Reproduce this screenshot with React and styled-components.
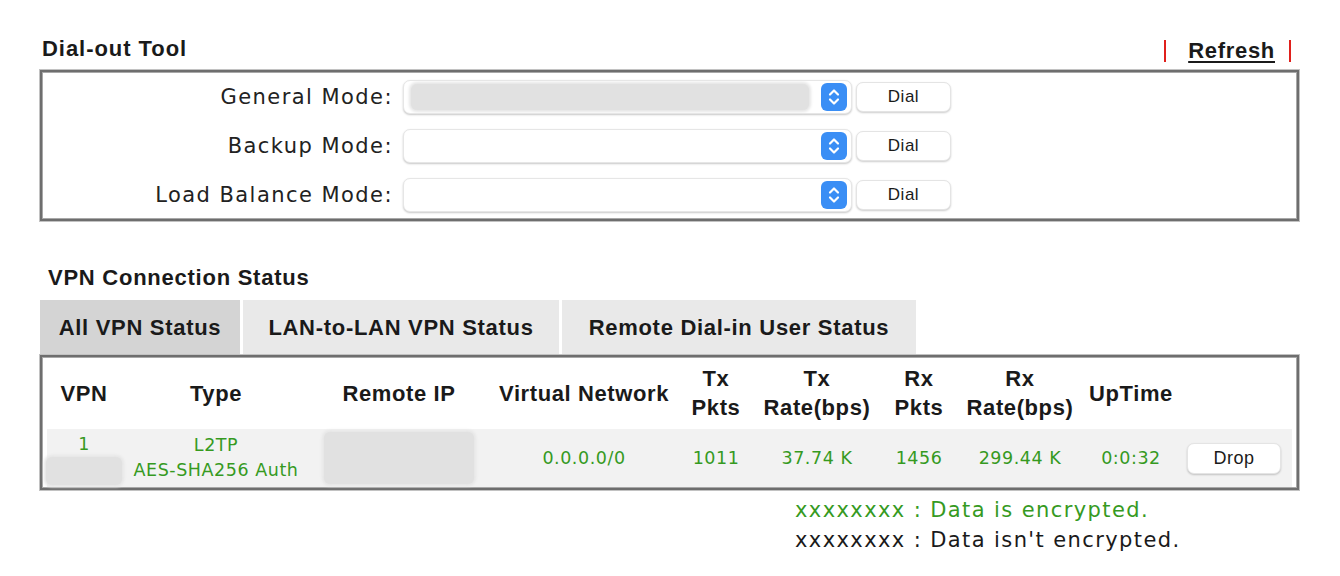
import React from "react";
import styled, { createGlobalStyle } from "styled-components";

const Global = createGlobalStyle`
  html, body { margin: 0; padding: 0; background: #fff; }
  body { font-family: "Liberation Sans", Arial, sans-serif; color: #1a1a1a; }
  * { box-sizing: border-box; }
`;

const GREEN = "#369a1f";

const Page = styled.div`
  width: 1340px;
  padding: 30px 0 0 40px;
`;

const Section = styled.div`
  width: 1259px;
`;

const SectionHead = styled.div`
  height: 40px;
  display: flex;
  align-items: flex-end;
  justify-content: space-between;
  padding: 0 8px 8px 2px;
`;

const Title = styled.div`
  font-family: "Liberation Sans", Arial, sans-serif;
  font-weight: bold;
  font-size: 22px;
  letter-spacing: 0.95px;
  line-height: 26px;
  color: #1a1a1a;
`;

const VpnTitle = styled(Title)`
  margin: 43px 0 8px 8px;
  line-height: 28px;
  letter-spacing: 0.75px;
`;

const RefreshWrap = styled.div`
  display: flex;
  align-items: center;
  gap: 22px;
  height: 26px;
  margin-bottom: -2px;
`;

const Bar = styled.span`
  display: block;
  width: 2px;
  height: 22px;
  background: #e0201c;
`;

const RefreshLink = styled.a`
  font-weight: bold;
  font-size: 22px;
  letter-spacing: 0.7px;
  color: #1a1a1a;
  text-decoration: underline;
  text-underline-offset: 3px;
  text-decoration-thickness: 2px;
  cursor: pointer;
  margin-right: -8px;
`;

const Frame = styled.div`
  border: 2px solid #6e6e6e;
  outline: 1px solid #c2c2c2;
  box-shadow: inset 0 0 0 1px #a8a8a8;
  padding: ${(p) => p.$pad};
`;

const DialRow = styled.div`
  height: 49px;
  display: flex;
  align-items: center;
`;

const Label = styled.div`
  width: 351px;
  margin-right: 10px;
  text-align: right;
  font-family: "DejaVu Sans", Verdana, sans-serif;
  font-size: 21px;
  letter-spacing: 1.45px;
  color: #222;
`;

const Select = styled.div`
  position: relative;
  width: 449px;
  height: 34px;
  border-radius: 7px;
  background: #fff;
  border: 1px solid #e6e6e6;
  box-shadow: 0 1px 2px rgba(0, 0, 0, 0.22);
  display: flex;
  align-items: center;
  padding: 0 4px 0 7px;
`;

const Blur = styled.div`
  background: #e1e1e1;
  border-radius: 6px;
  box-shadow: 0 0 3px 2px #e6e6e6;
  width: ${(p) => p.$w}px;
  height: ${(p) => p.$h}px;
`;

const SelectFill = styled.div`
  flex: 1;
  display: flex;
  align-items: center;
  height: 100%;
`;

const Stepper = styled.div`
  width: 26px;
  height: 28px;
  border-radius: 6px;
  background: #3a8ef5;
  display: flex;
  align-items: center;
  justify-content: center;
  margin-left: 10px;
`;

const MacButton = styled.button`
  width: ${(p) => p.$w}px;
  height: ${(p) => p.$h}px;
  margin-left: ${(p) => p.$ml || 0}px;
  border-radius: 7px;
  background: #fff;
  border: 1px solid #e4e4e4;
  box-shadow: 0 1px 2px rgba(0, 0, 0, 0.2);
  font-family: "Liberation Sans", Arial, sans-serif;
  font-size: ${(p) => p.$fs}px;
  letter-spacing: 0.5px;
  color: #1a1a1a;
  padding: 0;
`;

const Tabs = styled.div`
  display: flex;
  gap: 3px;
`;

const Tab = styled.div`
  width: ${(p) => p.$w}px;
  height: 55px;
  display: flex;
  align-items: center;
  justify-content: center;
  background: ${(p) => (p.$active ? "#d4d4d4" : "#e9e9e9")};
  font-weight: bold;
  font-size: 22px;
  letter-spacing: 0.7px;
  color: #1a1a1a;
`;

const COLS = "74px 190px 176px 194px 70px 132px 72px 130px 92px 114px";

const HeadRow = styled.div`
  display: grid;
  grid-template-columns: ${COLS};
  height: 72px;
  align-items: center;
`;

const HeadCell = styled.div`
  text-align: center;
  font-weight: bold;
  font-size: 22px;
  letter-spacing: 0.6px;
  line-height: 29px;
  color: #1a1a1a;
  white-space: nowrap;
`;

const DataRow = styled.div`
  display: grid;
  grid-template-columns: ${COLS};
  height: 58px;
  align-items: center;
  background: #f2f2f2;
`;

const Cell = styled.div`
  display: flex;
  flex-direction: column;
  align-items: center;
  justify-content: center;
  text-align: center;
  font-family: "DejaVu Sans", Verdana, sans-serif;
  font-size: 17.5px;
  letter-spacing: 0.55px;
  line-height: 25px;
  color: ${GREEN};
  white-space: nowrap;
`;

const Legend = styled.div`
  margin: 5px 0 0 755px;
  font-family: "DejaVu Sans", Verdana, sans-serif;
  font-size: 21px;
  letter-spacing: 1.4px;
  line-height: 30px;
`;

const LegendLine = styled.div`
  color: ${(p) => (p.$green ? GREEN : "#1a1a1a")};
`;

function StepIcon() {
  return (
    <svg width="14" height="20" viewBox="0 0 14 20" fill="none">
      <path d="M3 7.5 L7 3.5 L11 7.5" stroke="#fff" strokeWidth="2.2" strokeLinecap="round" strokeLinejoin="round" />
      <path d="M3 12.5 L7 16.5 L11 12.5" stroke="#fff" strokeWidth="2.2" strokeLinecap="round" strokeLinejoin="round" />
    </svg>
  );
}

function ModeRow({ label, filled }) {
  return (
    <DialRow>
      <Label>{label}</Label>
      <Select>
        <SelectFill>{filled && <Blur $w={398} $h={26} />}</SelectFill>
        <Stepper>
          <StepIcon />
        </Stepper>
      </Select>
      <MacButton $w={95} $h={30} $fs={17} $ml={4}>
        Dial
      </MacButton>
    </DialRow>
  );
}

export default function App() {
  return (
    <>
      <Global />
      <Page>
        <Section>
          <SectionHead>
            <Title>Dial-out Tool</Title>
            <RefreshWrap>
              <Bar />
              <RefreshLink>Refresh</RefreshLink>
              <Bar />
            </RefreshWrap>
          </SectionHead>
          <Frame $pad="0">
            <ModeRow label="General Mode:" filled />
            <ModeRow label="Backup Mode:" />
            <ModeRow label="Load Balance Mode:" />
          </Frame>

          <VpnTitle>VPN Connection Status</VpnTitle>
          <Tabs>
            <Tab $w={200} $active>All VPN Status</Tab>
            <Tab $w={316}>LAN-to-LAN VPN Status</Tab>
            <Tab $w={354}>Remote Dial-in User Status</Tab>
          </Tabs>
          <Frame $pad="0 5px 1px 5px">
            <HeadRow>
              <HeadCell>VPN</HeadCell>
              <HeadCell>Type</HeadCell>
              <HeadCell>Remote IP</HeadCell>
              <HeadCell>Virtual Network</HeadCell>
              <HeadCell>Tx<br />Pkts</HeadCell>
              <HeadCell>Tx<br />Rate(bps)</HeadCell>
              <HeadCell>Rx<br />Pkts</HeadCell>
              <HeadCell>Rx<br />Rate(bps)</HeadCell>
              <HeadCell>UpTime</HeadCell>
              <HeadCell />
            </HeadRow>
            <DataRow>
              <Cell>
                <span>1</span>
                <Blur $w={76} $h={28} />
              </Cell>
              <Cell>
                <span>L2TP</span>
                <span>AES-SHA256 Auth</span>
              </Cell>
              <Cell>
                <Blur $w={150} $h={52} />
              </Cell>
              <Cell>0.0.0.0/0</Cell>
              <Cell>1011</Cell>
              <Cell>37.74 K</Cell>
              <Cell>1456</Cell>
              <Cell>299.44 K</Cell>
              <Cell>0:0:32</Cell>
              <Cell>
                <MacButton $w={94} $h={31} $fs={18}>
                  Drop
                </MacButton>
              </Cell>
            </DataRow>
          </Frame>
          <Legend>
            <LegendLine $green>xxxxxxxx : Data is encrypted.</LegendLine>
            <LegendLine>xxxxxxxx : Data isn't encrypted.</LegendLine>
          </Legend>
        </Section>
      </Page>
    </>
  );
}
